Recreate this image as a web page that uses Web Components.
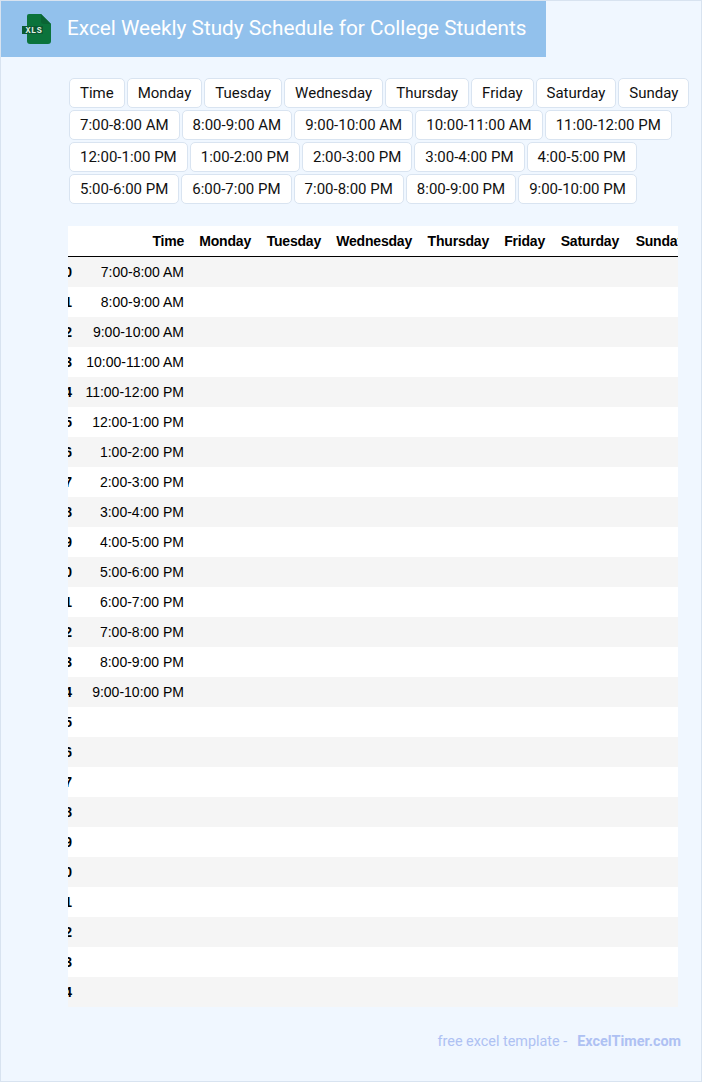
<!DOCTYPE html>
<html>
<head>
<meta charset="utf-8">
<style>
  html, body { margin: 0; padding: 0; background: #f0f7ff; }
</style>
</head>
<body>
<schedule-page></schedule-page>
<script>
const DAYS = ['Monday', 'Tuesday', 'Wednesday', 'Thursday', 'Friday', 'Saturday', 'Sunday'];
const SLOTS = [
  '7:00-8:00 AM', '8:00-9:00 AM', '9:00-10:00 AM', '10:00-11:00 AM', '11:00-12:00 PM',
  '12:00-1:00 PM', '1:00-2:00 PM', '2:00-3:00 PM', '3:00-4:00 PM', '4:00-5:00 PM',
  '5:00-6:00 PM', '6:00-7:00 PM', '7:00-8:00 PM', '8:00-9:00 PM', '9:00-10:00 PM'
];

class PageHeader extends HTMLElement {
  constructor() {
    super();
    this.attachShadow({ mode: 'open' }).innerHTML = `
      <style>
        :host {
          display: flex;
          align-items: center;
          width: 545px;
          height: 56px;
          background: #92c1ec;
          color: #fff;
          font: 20.75px Roboto, sans-serif;
        }
        svg { margin-left: 21px; margin-right: 15px; flex: none; }
        span { padding-bottom: 2px; }
      </style>
      <svg width="30" height="30" viewBox="0 0 30 30">
        <path d="M7 0H19L29 10V27Q29 30 26 30H8Q5 30 5 27V2Q5 0 7 0Z" fill="#0b733b"/>
        <path d="M19 0L29 10H22Q19 10 19 7Z" fill="#0a6434"/>
        <rect x="0" y="12" width="21" height="8" fill="#0a5a32"/>
        <text x="3.5" y="18.8" font-family="'Liberation Mono', monospace" font-size="8.5" font-weight="700" letter-spacing=".5" fill="#e6f2ea">XLS</text>
      </svg>
      <span><slot></slot></span>`;
  }
}

class TagList extends HTMLElement {
  constructor() {
    super();
    this.attachShadow({ mode: 'open' }).innerHTML = `
      <style>
        :host {
          display: flex;
          flex-wrap: wrap;
          gap: 2px;
          padding: 21px 8px 0 68px;
        }
      </style>
      <slot></slot>`;
  }
}

class TagItem extends HTMLElement {
  constructor() {
    super();
    this.attachShadow({ mode: 'open' }).innerHTML = `
      <style>
        :host {
          display: block;
          box-sizing: border-box;
          height: 30px;
          padding: 0 10px;
          background: #fff;
          border: 1px solid #d9e4f1;
          border-radius: 5px;
          color: #111;
          font: 15px/28px Roboto, sans-serif;
          white-space: nowrap;
        }
      </style>
      <slot></slot>`;
  }
}

class ScheduleTable extends HTMLElement {
  constructor() {
    super();
    const head = DAYS.map(d => `<th>${d}</th>`).join('');
    const empty = DAYS.map(() => '<td></td>').join('');
    let rows = '';
    for (let i = 0; i < 25; i++) {
      rows += `<tr><th>${i}</th><td>${SLOTS[i] || ''}</td>${empty}</tr>`;
    }
    this.attachShadow({ mode: 'open' }).innerHTML = `
      <style>
        :host {
          display: block;
          width: 610px;
          margin: 22px 0 0 67px;
          overflow: hidden;
          background: #fff;
          color: #000;
          font: 14px "Liberation Sans", Arial, sans-serif;
        }
        table {
          border-collapse: collapse;
          table-layout: fixed;
          width: 641px;
          margin-left: -17px;
        }
        th, td {
          padding: 0 7px 0 0;
          height: 30px;
          text-align: right;
          white-space: nowrap;
          font-weight: 400;
        }
        th { font-weight: 700; }
        thead th { letter-spacing: -.2px; }
        thead tr { border-bottom: 1px solid #000; }
        tbody tr:nth-child(odd) { background: #f5f5f5; }
      </style>
      <table>
        <colgroup>
          <col style="width:28px"><col style="width:112px">
          <col style="width:67px"><col style="width:70px"><col style="width:91px">
          <col style="width:77px"><col style="width:56px"><col style="width:74px"><col style="width:66px">
        </colgroup>
        <thead><tr><th></th><th>Time</th>${head}</tr></thead>
        <tbody>${rows}</tbody>
      </table>`;
  }
}

class PageFooter extends HTMLElement {
  constructor() {
    super();
    this.attachShadow({ mode: 'open' }).innerHTML = `
      <style>
        :host {
          display: flex;
          justify-content: flex-end;
          gap: 10px;
          padding: 26px 20px 0 0;
          color: #aec1f3;
          font: 14.4px/18px Roboto, sans-serif;
        }
        b { font-weight: 700; }
      </style>
      <span>free excel template -</span><b>ExcelTimer.com</b>`;
  }
}

class SchedulePage extends HTMLElement {
  constructor() {
    super();
    const tags = ['Time', ...DAYS, ...SLOTS].map(t => `<tag-item>${t}</tag-item>`).join('');
    this.attachShadow({ mode: 'open' }).innerHTML = `
      <style>
        :host {
          display: block;
          box-sizing: border-box;
          width: 702px;
          height: 1082px;
          overflow: hidden;
          background: #f0f7ff;
          border: 1px solid #d8e3f0;
        }
      </style>
      <page-header>Excel Weekly Study Schedule for College Students</page-header>
      <tag-list>${tags}</tag-list>
      <schedule-table></schedule-table>
      <page-footer></page-footer>`;
  }
}

customElements.define('page-header', PageHeader);
customElements.define('tag-item', TagItem);
customElements.define('tag-list', TagList);
customElements.define('schedule-table', ScheduleTable);
customElements.define('page-footer', PageFooter);
customElements.define('schedule-page', SchedulePage);
</script>
</body>
</html>
